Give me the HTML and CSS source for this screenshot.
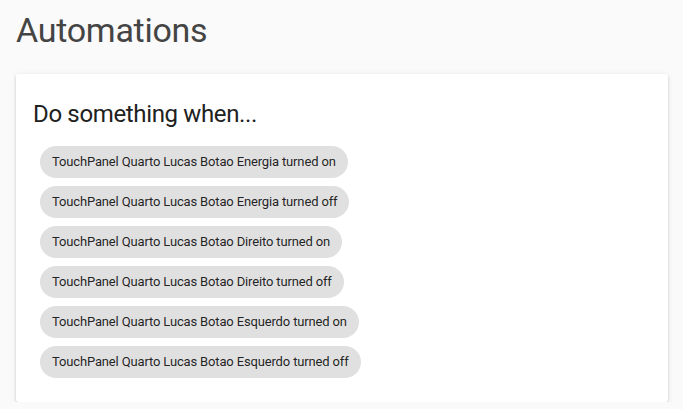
FILE: index.html
```html
<!DOCTYPE html>
<html>
<head>
<meta charset="utf-8">
<link rel="stylesheet" href="styles.css">
</head>
<body>
<h1 class="page-title">Automations</h1>
<div class="card">
  <h2 class="card-title">Do something when...</h2>
  <div class="chips">
    <div class="chip">TouchPanel Quarto Lucas Botao Energia turned on</div>
    <div class="chip">TouchPanel Quarto Lucas Botao Energia turned off</div>
    <div class="chip">TouchPanel Quarto Lucas Botao Direito turned on</div>
    <div class="chip">TouchPanel Quarto Lucas Botao Direito turned off</div>
    <div class="chip">TouchPanel Quarto Lucas Botao Esquerdo turned on</div>
    <div class="chip">TouchPanel Quarto Lucas Botao Esquerdo turned off</div>
  </div>
</div>
</body>
</html>
```
FILE: styles.css
```css
html, body {
  margin: 0;
  padding: 0;
  background: #fafafa;
  font-family: Roboto, "Liberation Sans", sans-serif;
}
body {
  padding: 10px 15px 0 16px;
}
.page-title {
  margin: 0 0 24px 0;
  font-size: 34px;
  line-height: 40px;
  font-weight: 400;
  letter-spacing: -0.27px;
  color: #444;
}
.card {
  background: #fff;
  border-radius: 2px;
  box-shadow: 0 2px 2px 0 rgba(0,0,0,.14), 0 1px 5px 0 rgba(0,0,0,.12), 0 3px 1px -2px rgba(0,0,0,.2);
  padding: 24px 16px 24px 17px;
}
.card-title {
  margin: 0 0 16px 0;
  font-size: 24px;
  line-height: 32px;
  font-weight: 400;
  letter-spacing: -0.35px;
  color: #212121;
}
.chips {
  display: flex;
  flex-direction: column;
  align-items: flex-start;
  gap: 8px;
  padding-left: 7px;
}
.chip {
  background: #e0e0e0;
  border-radius: 16px;
  height: 32px;
  line-height: 32px;
  padding: 0 12px;
  font-size: 13px;
  letter-spacing: -0.15px;
  color: rgba(0,0,0,.87);
  white-space: nowrap;
}
```
